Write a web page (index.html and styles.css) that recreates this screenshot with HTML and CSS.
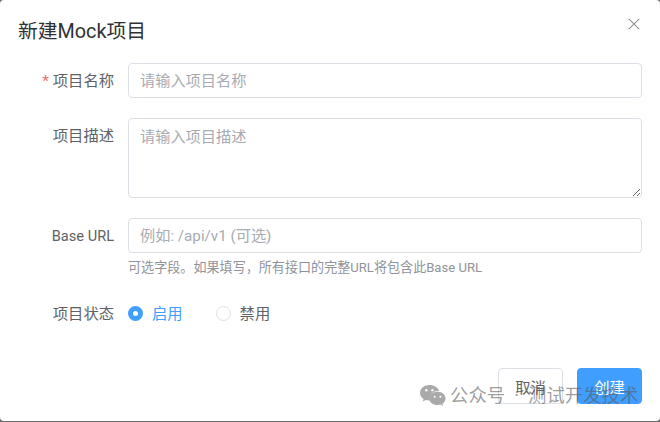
FILE: index.html
```html
<!DOCTYPE html>
<html lang="zh-CN">
<head>
<meta charset="utf-8">
<title>新建Mock项目</title>
<link rel="stylesheet" href="styles.css">
</head>
<body>
<div class="dialog">
  <header class="head">
    <h2 class="title">新建Mock项目</h2>
    <button class="close" aria-label="关闭">
      <svg width="12" height="12" viewBox="0 0 12 12"><path d="M.8.8l10.4 10.4M11.2.8L.8 11.2" stroke="#8c9096" stroke-width="1.1" fill="none"/></svg>
    </button>
  </header>
  <form class="form">
    <div class="row row-name">
      <label class="label"><span class="req">*</span>项目名称</label>
      <div class="field"><input class="input" placeholder="请输入项目名称"></div>
    </div>
    <div class="row row-desc">
      <label class="label">项目描述</label>
      <div class="field"><textarea class="input area" placeholder="请输入项目描述"></textarea></div>
    </div>
    <div class="row row-url">
      <label class="label label-latin">Base URL</label>
      <div class="field">
        <input class="input" placeholder="例如: /api/v1 (可选)">
        <p class="help">可选字段。如果填写，所有接口的完整URL将包含此Base URL</p>
      </div>
    </div>
    <div class="row row-status">
      <label class="label">项目状态</label>
      <div class="radios">
        <span class="radio on"><i class="dot"></i>启用</span>
        <span class="radio"><i class="dot"></i>禁用</span>
      </div>
    </div>
  </form>
  <footer class="foot">
    <button class="btn" type="button">取消</button>
    <button class="btn primary" type="button">创建</button>
  </footer>
  <div class="mark">
    <svg width="26" height="21" viewBox="0 0 26 21"><path fill="#a9a9a9" d="M9.5 0C4.3 0 0 3.5 0 7.9c0 2.5 1.4 4.6 3.6 6l-.9 2.7 3.2-1.7c1.1.3 2.3.5 3.6.5h.6c-.3-.8-.4-1.5-.4-2.3 0-4 3.9-7.2 8.6-7.2h.8C17.900 2.400 14.100 0 9.500 0z"/><path fill="#a9a9a9" d="M17.600 6.800c-4.600 0-8.300 2.900-8.300 6.600s3.700 6.600 8.300 6.600c1 0 1.900-.1 2.800-.4l2.700 1.400-.7-2.300c1.900-1.200 3.100-3.100 3.100-5.300 0-3.700-3.300-6.600-7.900-6.600z"/><circle cx="6.300" cy="5.200" r="1.200" fill="#fff"/><circle cx="12.500" cy="5.200" r="1.200" fill="#fff"/><circle cx="14.700" cy="11.800" r="1" fill="#fff"/><circle cx="20.400" cy="11.800" r="1" fill="#fff"/></svg>
    <span class="mark-text">公众号<span class="sep">·</span>测试开发技术</span>
  </div>
</div>
</body>
</html>
```
FILE: styles.css
```css
* { box-sizing: border-box; }
html, body { margin: 0; height: 422px; overflow: hidden; background: #6b6b6b; }
body { font-family: Roboto, "Noto Sans CJK SC", sans-serif; }
.dialog { position: relative; width: 660px; height: 421px; background: #fff; border-radius: 4px; }
.head { height: 63px; padding: 19px 18px 0; }
.title { margin: 0; font-size: 19.800px; line-height: 26px; font-weight: 400; color: #303133; }
.close { position: absolute; top: 18px; left: 628px; width: 12px; height: 12px; padding: 0; border: 0; background: none; display: flex; }
.form { padding: 0 18px; }
.row { display: flex; }
.row-name { height: 55px; }
.row-desc { height: 100px; }
.row-url { height: 78px; }
.label { width: 110px; flex: none; padding-right: 14px; text-align: right; font-size: 15.300px; line-height: 37px; color: #606266; }
.row-desc .label { line-height: 37px; }
.label-latin { font-size: 14.600px; }
.req { color: #f56c6c; margin-right: 4px; }
.field { flex: 1; min-width: 0; }
.input { display: block; width: 100%; height: 35px; padding: 0 11px; border: 1px solid #dcdfe6; border-radius: 4px; font: 15.200px Roboto, "Noto Sans CJK SC", sans-serif; color: #606266; background: #fff; outline: 0; }
.input::placeholder { color: #a8abb2; opacity: 1; }
.area { height: 80px; padding: 5px 11px; line-height: 26px; resize: vertical; }
.help { margin: 6px 0 0; font-size: 13.080px; line-height: 18px; color: #909399; }
.row-status { height: 35px; align-items: center; }
.row-status .label { line-height: 22px; }
.radios { display: flex; gap: 33px; }
.radio { display: flex; align-items: center; gap: 9px; font-size: 15.300px; line-height: 20px; color: #606266; }
.radio.on { color: #409eff; }
.dot { width: 15px; height: 15px; border: 1px solid #dcdfe6; border-radius: 50%; background: #fff; }
.on .dot { border: 5px solid #409eff; }
.foot { position: absolute; right: 18px; bottom: 17px; display: flex; gap: 14px; }
.btn { width: 65px; height: 36px; padding: 0; border: 1px solid #dcdfe6; border-radius: 4px; background: #fff; color: #606266; font: 15.300px Roboto, "Noto Sans CJK SC", sans-serif; }
.primary { background: #409eff; border-color: #409eff; color: #fff; }
.mark { position: absolute; left: 420px; top: 385px; display: flex; align-items: center; gap: 4px; color: rgba(90, 90, 90, .6); font-size: 18.400px; line-height: 21px; white-space: nowrap; }
.sep { margin: 0 9px; }
```
